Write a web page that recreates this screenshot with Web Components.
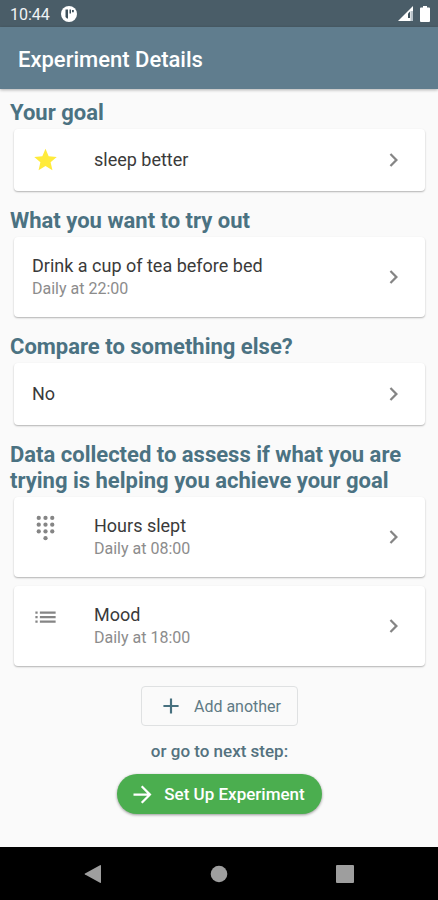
<!DOCTYPE html>
<html lang="en">
<head>
<meta charset="utf-8">
<meta name="viewport" content="width=device-width, initial-scale=1">
<title>Experiment Details</title>
<style>
  html, body { margin: 0; }
  body { font-family: Roboto, "Liberation Sans", sans-serif; background: #fafafa; color: #212121; }
</style>
</head>
<body>
<experiment-app></experiment-app>

<script>
const define = (name, html) => {
  const template = document.createElement('template');
  template.innerHTML = html;
  customElements.define(name, class extends HTMLElement {
    constructor() {
      super();
      this.attachShadow({ mode: 'open' }).append(template.content.cloneNode(true));
    }
  });
};

define('status-bar', `
  <style>
    :host { display: flex; align-items: center; gap: 11px; height: 27px; padding: 0 8px 0 10px; background: #4a5d68; color: #f0f3f5; font-size: 16px; line-height: 20px; }
    time { flex: none; padding-top: 2px; }
    .right { margin-left: auto; display: flex; gap: 7px; }
    svg { display: block; }
  </style>
  <time>10:44</time>
  <svg width="16" height="16" viewBox="0 0 16 16" aria-hidden="true">
    <circle cx="8" cy="8" r="8" fill="#fff"/>
    <path d="M4.500 3.500h2.500v9H6L4.500 11zM8.500 3.500h1.500V7.500H8.500zM11 4h1.800v2.200H11z" fill="#3e515c"/>
  </svg>
  <span class="right">
    <svg width="15" height="15" viewBox="0 0 15 15" aria-hidden="true">
      <path d="M15 0v15H0z" fill="#fff"/><path d="M12 5.500v6.500h-2V7.500z" fill="#3e515c"/><path d="M12.500 5H15V15h-2.500z" fill="#b9c3c9"/>
    </svg>
    <svg width="10" height="16" viewBox="0 0 10 16" aria-hidden="true">
      <path d="M3 0h4v1.500h2q1 0 1 1V15q0 1-1 1H1q-1 0-1-1V2.500q0-1 1-1h2z" fill="#fff"/>
    </svg>
  </span>`);

define('app-bar', `
  <style>
    :host { display: flex; align-items: center; height: 62px; padding: 0 18px; background: #607d8e; color: #fff; box-shadow: 0 1px 3px rgba(0,0,0,.3); position: relative; }
    h1 { margin: 0; padding-top: 3px; font-size: 22px; line-height: 26px; font-weight: 500; }
  </style>
  <h1><slot></slot></h1>`);

define('detail-section', `
  <style>
    :host { display: flex; flex-direction: column; gap: 3px; }
    h2 { margin: 0; font-size: 22px; line-height: 26px; font-weight: 700; color: #4b7282; }
    .cards { display: flex; flex-direction: column; gap: 9px; padding: 0 4px; }
  </style>
  <h2><slot name="title"></slot></h2>
  <div class="cards"><slot></slot></div>`);

define('detail-card', `
  <style>
    :host { display: block; }
    button { display: flex; width: 100%; box-sizing: border-box; align-items: flex-start; padding: 17px 18px; border: 0; border-radius: 4px; background: #fff; font: inherit; text-align: left; color: #3a3a3a; cursor: pointer;
      box-shadow: 0 1px 2px rgba(0,0,0,.24), 0 1px 1px rgba(0,0,0,.06); }
    slot[name=icon]::slotted(svg) { flex: none; display: block; width: 27px; height: 28px; margin-right: 35px; }
    .text { flex: 1; min-width: 0; display: flex; flex-direction: column; align-self: center; }
    .title { font-size: 18px; line-height: 24px; }
    slot[name=sub]::slotted(span) { display: block; font-size: 16px; line-height: 22px; color: #8c8c8c; }
    .chevron { flex: none; align-self: center; display: block; }
  </style>
  <button type="button">
    <slot name="icon"></slot>
    <span class="text"><span class="title"><slot></slot></span><slot name="sub"></slot></span>
    <svg class="chevron" width="27" height="28" viewBox="0 0 24 24" fill="#858585" aria-hidden="true"><path d="M10 6 8.590 7.410 13.170 12l-4.580 4.590L10 18l6-6z"/></svg>
  </button>`);

define('outline-button', `
  <style>
    :host { display: block; }
    button { display: flex; align-items: center; gap: 10px; height: 40px; padding: 0 16px; border: 1px solid #dfe1e2; border-radius: 4px; background: transparent; color: #5f7a85; font: inherit; font-size: 16px; cursor: pointer; }
    svg { display: block; }
  </style>
  <button type="button">
    <svg width="26" height="26" viewBox="0 0 24 24" fill="#47707f" aria-hidden="true"><path d="M19 13h-6v6h-2v-6H5v-2h6V5h2v6h6z"/></svg>
    <slot></slot>
  </button>`);

define('pill-button', `
  <style>
    :host { display: block; }
    button { display: flex; align-items: center; gap: 8px; height: 40px; padding: 0 17px 0 12px; border: 0; border-radius: 20px; background: #4bae4f; color: #fff; font: inherit; font-size: 17px; font-weight: 500; cursor: pointer; box-shadow: 0 1px 3px rgba(0,0,0,.4); }
    svg { display: block; }
  </style>
  <button type="button">
    <svg width="27" height="27" viewBox="0 0 24 24" fill="#fff" aria-hidden="true"><path d="m12 4-1.410 1.410L16.170 11H4v2h12.170l-5.580 5.590L12 20l8-8z"/></svg>
    <slot></slot>
  </button>`);

define('system-nav', `
  <style>
    :host { display: block; background: #000; }
    nav { display: flex; justify-content: center; height: 53px; }
    button { flex: 0 1 126px; display: grid; place-items: center; border: 0; padding: 0; background: none; cursor: pointer; }
    svg { display: block; fill: #9e9e9e; }
  </style>
  <nav aria-label="System">
    <button type="button" aria-label="Back"><svg width="18" height="20" viewBox="0 0 18 20"><path d="M16 1.200q1-.5 1 .5v16.600q0 1-1 .5L1 10.600q-1-.6 0-1.200z"/></svg></button>
    <button type="button" aria-label="Home"><svg width="18" height="18" viewBox="0 0 18 18"><circle cx="9" cy="9" r="8.300"/></svg></button>
    <button type="button" aria-label="Recent apps"><svg width="18" height="18" viewBox="0 0 18 18"><rect width="18" height="18" rx="1"/></svg></button>
  </nav>`);

define('experiment-app', `
  <style>
    :host { display: flex; flex-direction: column; min-height: 100vh; }
    main { flex: 1; display: flex; flex-direction: column; gap: 17px; padding: 11px 9px 10px 10px; }
    footer { display: flex; flex-direction: column; align-items: center; padding-top: 3px; }
    p { margin: 0; padding: 15px 0 12px; font-size: 17px; line-height: 21px; font-weight: 500; color: #54727f; }
  </style>
  <status-bar></status-bar>
  <app-bar>Experiment Details</app-bar>
  <main>
    <detail-section>
      <span slot="title">Your goal</span>
      <detail-card>
        <svg slot="icon" viewBox="0 0 24 24" fill="#ffeb3b" aria-hidden="true"><path d="M12 17.270 18.180 21l-1.640-7.030L22 9.240l-7.190-.61L12 2 9.190 8.630 2 9.240l5.460 4.730L5.820 21z"/></svg>
        sleep better
      </detail-card>
    </detail-section>
    <detail-section>
      <span slot="title">What you want to try out</span>
      <detail-card>Drink a cup of tea before bed<span slot="sub">Daily at 22:00</span></detail-card>
    </detail-section>
    <detail-section>
      <span slot="title">Compare to something else?</span>
      <detail-card>No</detail-card>
    </detail-section>
    <detail-section>
      <span slot="title">Data collected to assess if what you are trying is helping you achieve your goal</span>
      <detail-card>
        <svg slot="icon" viewBox="0 0 24 24" fill="#858585" aria-hidden="true">
          <circle cx="6" cy="3" r="1.900"/><circle cx="12" cy="3" r="1.900"/><circle cx="18" cy="3" r="1.900"/>
          <circle cx="6" cy="9" r="1.900"/><circle cx="12" cy="9" r="1.900"/><circle cx="18" cy="9" r="1.900"/>
          <circle cx="6" cy="15" r="1.900"/><circle cx="12" cy="15" r="1.900"/><circle cx="18" cy="15" r="1.900"/><circle cx="12" cy="21" r="1.900"/>
        </svg>
        Hours slept<span slot="sub">Daily at 08:00</span>
      </detail-card>
      <detail-card>
        <svg slot="icon" viewBox="0 0 24 24" fill="#858585" aria-hidden="true"><path d="M3 13h2v-2H3zm0 4h2v-2H3zm0-8h2V7H3zm4 4h14v-2H7zm0 4h14v-2H7zM7 7v2h14V7z"/></svg>
        Mood<span slot="sub">Daily at 18:00</span>
      </detail-card>
    </detail-section>
    <footer>
      <outline-button>Add another</outline-button>
      <p>or go to next step:</p>
      <pill-button>Set Up Experiment</pill-button>
    </footer>
  </main>
  <system-nav></system-nav>`);
</script>
</body>
</html>
